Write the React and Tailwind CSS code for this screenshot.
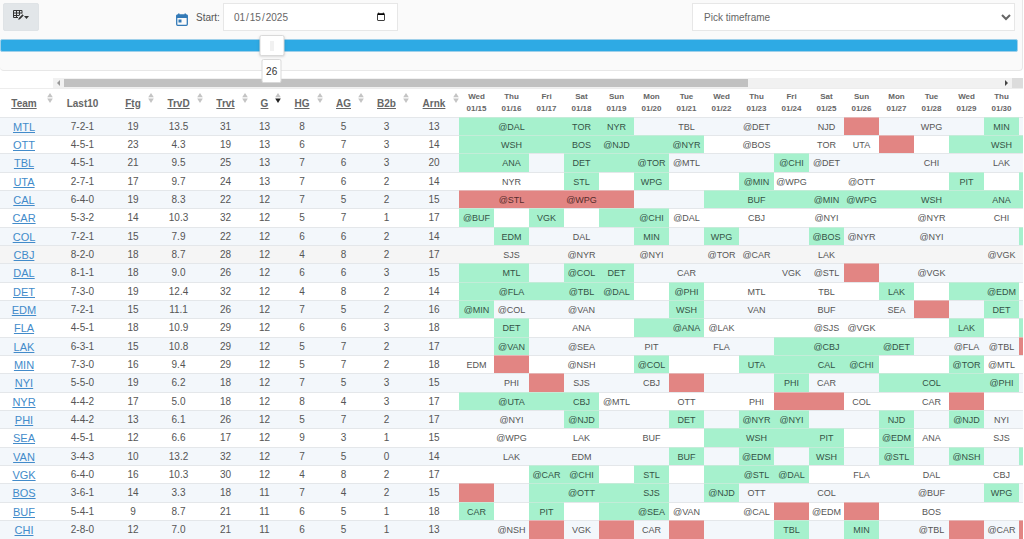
import { useState } from 'react';

const columns = [
  { label: 'Team', sort: true },
  { label: 'Last10', sort: false },
  { label: 'Ftg', sort: true },
  { label: 'TrvD', sort: true },
  { label: 'Trvt', sort: true },
  { label: 'G', sort: true, active: true },
  { label: 'HG', sort: true },
  { label: 'AG', sort: true },
  { label: 'B2b', sort: true },
  { label: 'Arnk', sort: true },
];

const days = [
  'Wed 01/15', 'Thu 01/16', 'Fri 01/17', 'Sat 01/18', 'Sun 01/19', 'Mon 01/20', 'Tue 01/21', 'Wed 01/22',
  'Thu 01/23', 'Fri 01/24', 'Sat 01/25', 'Sun 01/26', 'Mon 01/27', 'Tue 01/28', 'Wed 01/29', 'Thu 01/30',
];

// games: one entry per day, "+" is a good stretch, "-" a bad one, "." no game
const teams = [
  { stats: 'MTL 7-2-1 19 13.5 31 13 8 5 3 13', games: '+ +@DAL + +TOR +NYR . TBL . @DET . NJD - . WPG . +MIN .' },
  { stats: 'OTT 4-5-1 23 4.3 19 13 6 7 3 14', games: '+ +WSH + +BOS +@NJD + +@NYR . @BOS . TOR UTA - . + +WSH +' },
  { stats: 'TBL 4-5-1 21 9.5 25 13 7 6 3 20', games: '+ +ANA . +DET + +@TOR @MTL . . +@CHI @DET . . CHI . LAK .' },
  { stats: 'UTA 2-7-1 17 9.7 24 13 7 6 2 14', games: '. NYR . +STL . +WPG . . +@MIN @WPG . @OTT . . +PIT . +' },
  { stats: 'CAL 6-4-0 19 8.3 22 12 7 5 2 15', games: '- -@STL - -@WPG - . . + +BUF + +@MIN +@WPG + +WSH + +ANA +' },
  { stats: 'CAR 5-3-2 14 10.3 32 12 5 7 1 17', games: '+@BUF . +VGK . + +@CHI @DAL . CBJ . @NYI . . @NYR . CHI .' },
  { stats: 'COL 7-2-1 15 7.9 22 12 6 6 2 14', games: '. +EDM . DAL . +MIN . +WPG . . +@BOS @NYR . @NYI . . +' },
  { stats: 'CBJ 8-2-0 18 8.7 28 12 4 8 2 17', games: '. SJS . @NYR . @NYI . @TOR @CAR . LAK . . . . @VGK .', selected: true },
  { stats: 'DAL 8-1-1 18 9.0 26 12 6 6 3 15', games: '+ +MTL . +@COL +DET . CAR . . VGK @STL - . @VGK . . .' },
  { stats: 'DET 7-3-0 19 12.4 32 12 4 8 2 14', games: '+ +@FLA + +@TBL +@DAL . +@PHI . MTL . TBL . +LAK . + +@EDM .' },
  { stats: 'EDM 7-2-1 15 11.1 26 12 7 5 2 16', games: '+@MIN @COL . @VAN . . +WSH . VAN . BUF . SEA - . +DET .' },
  { stats: 'FLA 4-5-1 18 10.9 29 12 6 6 3 18', games: '. +DET . ANA . + +@ANA @LAK . . @SJS @VGK . . +LAK . +' },
  { stats: 'LAK 6-3-1 15 10.8 29 12 5 7 2 17', games: '. +@VAN . @SEA . PIT . FLA . + +@CBJ + +@DET . @FLA @TBL -' },
  { stats: 'MIN 7-3-0 16 9.4 29 12 5 7 2 18', games: 'EDM - . @NSH . +@COL . . +UTA + +CAL +@CHI . . +@TOR @MTL .' },
  { stats: 'NYI 5-5-0 19 6.2 18 12 7 5 3 15', games: '. PHI - SJS . CBJ - . . +PHI CAR . + +COL + +@PHI .' },
  { stats: 'NYR 4-4-2 17 5.0 18 12 8 4 3 17', games: '+ +@UTA + +CBJ @MTL . OTT . PHI - - COL . CAR - . .' },
  { stats: 'PHI 4-4-2 13 6.1 26 12 5 7 2 17', games: '. @NYI . +@NJD . . +DET . +@NYR +@NYI . . +NJD . +@NJD NYI .' },
  { stats: 'SEA 4-5-1 12 6.6 17 12 9 3 1 15', games: '. @WPG . LAK . BUF . + +WSH + +PIT . +@EDM ANA . SJS .' },
  { stats: 'VAN 3-4-3 10 13.2 32 12 7 5 0 14', games: '. LAK . EDM . . +BUF . +@EDM . +WSH . +@STL . +@NSH . +' },
  { stats: 'VGK 6-4-0 16 10.3 30 12 4 8 2 17', games: '. . +@CAR +@CHI . +STL . + +@STL +@DAL . FLA . DAL . CBJ .' },
  { stats: 'BOS 3-6-1 14 3.3 18 11 7 4 2 15', games: '- . + +@OTT + +SJS . +@NJD OTT . COL . . @BUF . +WPG .' },
  { stats: 'BUF 5-4-1 9 8.7 21 11 6 5 1 18', games: '+CAR . +PIT . + +@SEA @VAN . @CAL - @EDM - . BOS . . .' },
  { stats: 'CHI 2-8-0 12 7.0 21 11 6 5 1 13', games: '. @NSH - VGK - CAR - . . +TBL . +MIN . @TBL - @CAR -' },
];

function cellColor(game) {
  if (game.startsWith('+')) return 'bg-[#a6f1cd] border-[#c3ecd8] text-[#345346]';
  if (game.startsWith('-')) return 'bg-[#e28583] border-[#e5b4b4] text-[#552c2c]';
  return 'border-[#e4e7ea]';
}

function SortIcon({ active }) {
  return (
    <svg width="6" height="10" viewBox="0 0 6 10" className="absolute top-1 right-0">
      <path d="M3 0L5.8 4.2H.2z" fill="#c4c4c4" />
      <path d="M3 10L.2 5.5h5.6z" fill={active ? '#222' : '#c4c4c4'} />
    </svg>
  );
}

function TableEditIcon() {
  return (
    <svg width="11" height="10" viewBox="0 0 11 10" fill="none" stroke="#333" strokeWidth="1">
      <path d="M9 3.500V.5H.5v7H5M.5 3H9M.5 5.500H6M3.500.5v7M6.500.5v5" />
      <path d="M5.500 9.500L6 8l3.500-3.500 1 1L7 9z" fill="#333" strokeWidth=".4" />
    </svg>
  );
}

function CalendarIcon() {
  return (
    <svg width="12" height="13" viewBox="0 0 12 13" fill="none">
      <rect x=".7" y="2" width="10.6" height="10.3" rx="1" stroke="#337ab7" strokeWidth="1.3" />
      <path d="M.5 2h11v3H.5zM2 .5h1.500V2H2zM8.500.5H10V2H8.500z" fill="#337ab7" />
      <path d="M2.500 6.500h3v3h-3z" fill="#337ab7" />
    </svg>
  );
}

export default function App() {
  const [start, setStart] = useState('2025-01-15');
  const [range, setRange] = useState(26);

  return (
    <div className="h-screen overflow-hidden bg-white pr-px font-['Liberation_Sans',Arial,sans-serif] text-[10px] text-[#555]">
      <div className="h-[71px] rounded-b-sm border-r border-b border-[#e7e7e7] bg-[#fafafa] pt-[3px]">
        <div className="flex h-7 items-start pr-[7px] pl-[3px]">
          <button
            type="button"
            aria-label="Columns"
            className="flex h-7 w-9 items-center justify-center rounded-xs border border-[#dfe3e6] bg-[#e2e6e9] pb-1"
          >
            <TableEditIcon />
            <svg width="5" height="3" viewBox="0 0 5 3" className="mt-1"><path d="M0 0h5L2.500 3z" fill="#333" /></svg>
          </button>

          <div className="ml-[137px] flex h-7 items-center">
            <span className="mt-1 mr-2"><CalendarIcon /></span>
            <label htmlFor="start" className="mr-[3px]">Start:</label>
            <input
              id="start"
              type="date"
              value={start}
              onChange={(e) => setStart(e.target.value)}
              className="h-7 w-[175px] border border-[#e7e7e7] bg-white px-[9px] text-[10px] text-[#666]"
            />
          </div>

          <select
            aria-label="Timeframe"
            className="ml-auto h-7 w-[323px] border border-[#e7e7e7] bg-white px-[7px] text-[10px] text-[#666]"
          >
            <option>Pick timeframe</option>
            <option>This week</option>
            <option>Next week</option>
          </select>
        </div>

        <div className="relative mt-2 mr-1 h-[13px] rounded-xs border border-[#9fd0ea] bg-[#2eaae4]">
          <input
            type="range"
            min="1"
            max="95"
            aria-label="Days"
            value={range}
            onChange={(e) => setRange(Number(e.target.value))}
            className="absolute inset-0 w-full opacity-0"
          />
          <div
            className="pointer-events-none absolute -top-[5px] z-10 flex -translate-x-1/2 flex-col items-center"
            style={{ left: `${(range / 97.6) * 100}%` }}
          >
            <div className="flex h-[21px] w-[25px] items-center justify-center gap-px rounded-xs border border-[#d9d9d9] bg-white shadow-sm">
              <span className="h-2.5 w-px bg-[#e4e4e4]" />
              <span className="h-2.5 w-px bg-[#e4e4e4]" />
            </div>
            <div className="mt-[3px] flex h-6 w-5 items-center justify-center rounded-xs border border-[#d9d9d9] bg-white text-[#333]">
              {range}
            </div>
          </div>
        </div>
      </div>

      <div className="mt-[7px] flex h-[11px] border-b border-[#ededed]">
        <div className="w-[53px] shrink-0" />
        <div className="flex flex-1 items-center bg-[#f1f1f1]">
          <button type="button" aria-label="Scroll left" className="flex h-full w-[11px] items-center justify-center">
            <svg width="3" height="6" viewBox="0 0 3 6"><path d="M3 0v6L0 3z" fill="#999" /></svg>
          </button>
          <div className="h-full flex-1 py-px">
            <div className="h-full w-[73%] bg-[#c1c1c1]" />
          </div>
          <button type="button" aria-label="Scroll right" className="flex h-full w-[11px] items-center justify-center">
            <svg width="3" height="6" viewBox="0 0 3 6"><path d="M0 0v6l3-3z" fill="#444" /></svg>
          </button>
        </div>
        <div className="w-[11px] bg-[#dcdcdc]" />
      </div>

      <div className="overflow-hidden">
        <table className="w-[1054px] table-fixed border-separate border-spacing-0 text-center">
          <colgroup>
            <col className="w-[53px]" />
            <col className="w-[59px]" />
            <col className="w-[42px]" />
            <col className="w-[49px]" />
            <col className="w-[45px]" />
            <col className="w-[33px]" />
            <col className="w-[42px]" />
            <col className="w-[41px]" />
            <col className="w-[45px]" />
            <col className="w-[50px]" />
          </colgroup>
          <thead>
            <tr className="h-[28px]">
              {columns.map((c) => (
                <th key={c.label} className="relative p-0 font-bold text-[#666] first:pr-[5px]">
                  <span className={c.sort ? 'underline' : ''}>{c.label}</span>
                  {c.sort && <SortIcon active={c.active} />}
                </th>
              ))}
              {days.map((d) => (
                <th key={d} className="p-0 text-[8px] leading-3 font-bold text-[#666]">
                  {d.split(' ')[0]}
                  <br />
                  {d.split(' ')[1]}
                </th>
              ))}
              <th className="p-0" />
            </tr>
          </thead>
          <tbody>
            {teams.map(({ stats, games, selected }) => {
              const [team, ...values] = stats.split(' ');
              return (
                <tr
                  key={team}
                  className={`h-[18px] leading-4 last:h-[19px] nth-[3n]:h-[19px] ${selected ? 'bg-[#f5f5f5]' : 'odd:bg-[#f3f7fb]'}`}
                >
                  <td className="border-t border-[#e4e7ea] p-0 pr-[5px] text-[11px]">
                    <a href={`#${team}`} className="text-[#428bca] underline">{team}</a>
                  </td>
                  {values.map((v, i) => (
                    <td key={i} className="border-t border-[#e4e7ea] p-0">{v}</td>
                  ))}
                  {games.split(' ').map((g, i) => (
                    <td key={i} className={`border-t p-0 text-[9px] ${cellColor(g)}`}>
                      {g.replace(/^[+\-.]/, '')}
                    </td>
                  ))}
                </tr>
              );
            })}
          </tbody>
        </table>
      </div>
    </div>
  );
}
